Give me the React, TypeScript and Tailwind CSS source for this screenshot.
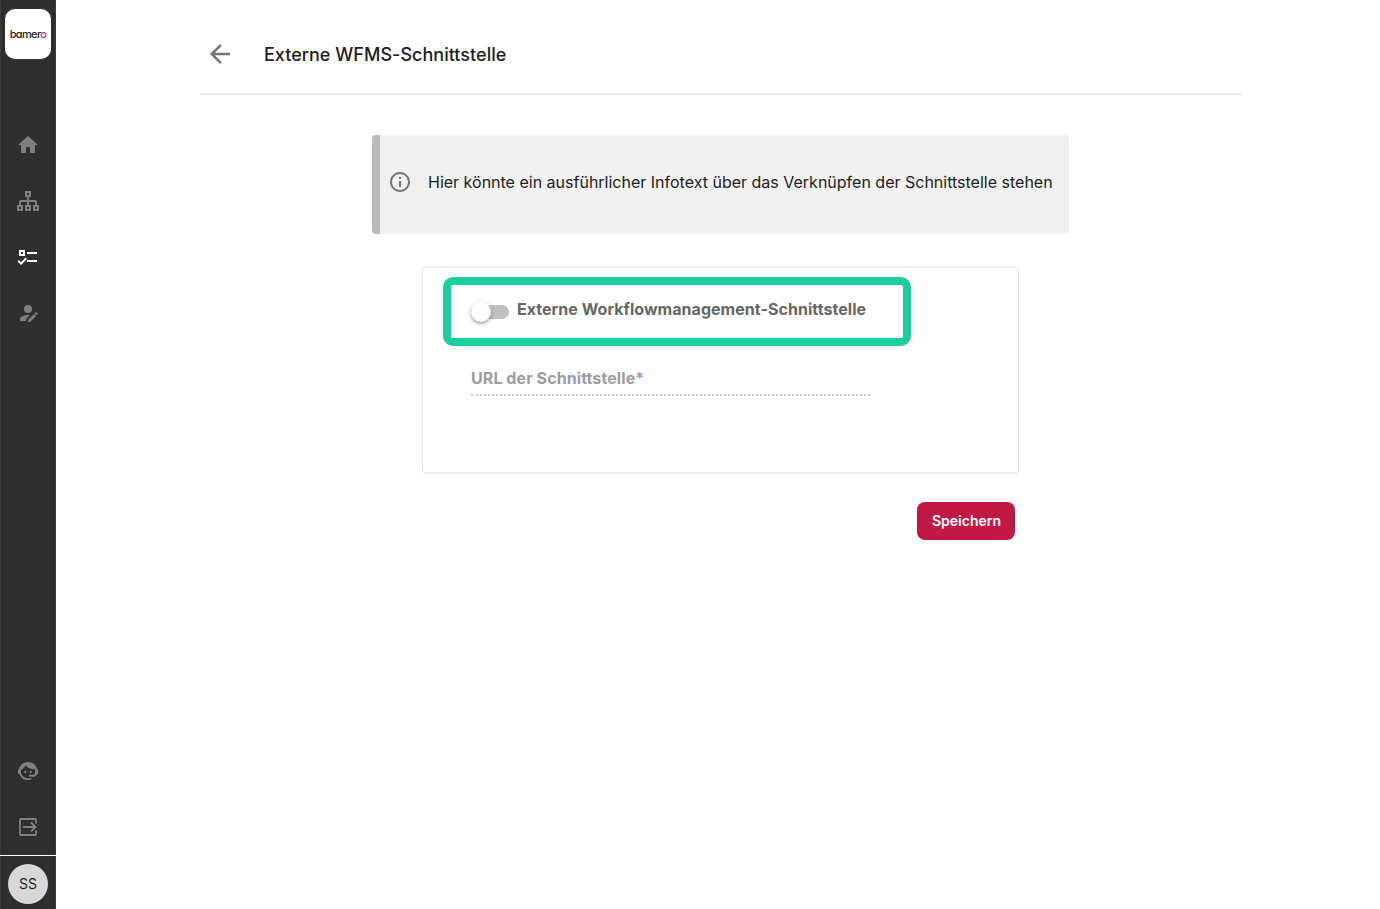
import React from "react";
import { MdHome, MdArrowBack, MdInfoOutline } from "react-icons/md";

function Icon({ children }: { children: React.ReactNode }) {
  return (
    <svg viewBox="0 0 24 24" className="size-6" fill="currentColor" aria-hidden="true">
      {children}
    </svg>
  );
}

function SitemapIcon() {
  return (
    <Icon>
      <g fill="none" stroke="currentColor" strokeWidth="2">
        <path d="M10 3h4v4h-4zM2 17h4v4H2zM10 17h4v4h-4zM18 17h4v4h-4zM12 8v8M4 16v-3q0-1 1-1h14q1 0 1 1v3" />
      </g>
    </Icon>
  );
}

function ChecklistIcon() {
  return (
    <Icon>
      <path d="M3 5v6h6V5H3m2 2h2v2H5V7m6 0h10v2H11V7m0 8h10v2H11v-2m-6 5l-3.500-3.500 1.410-1.410L5 17.170l4.590-4.580L11 14l-6 6z" />
    </Icon>
  );
}

function AccountEditIcon() {
  return (
    <Icon>
      <path d="M21.7 13.35L20.7 14.35L18.65 12.3L19.65 11.3C19.86 11.09 20.21 11.09 20.42 11.3L21.7 12.58C21.91 12.79 21.91 13.14 21.7 13.35M12 18.94L18.06 12.88L20.11 14.93L14.06 21H12V18.94M12 14C7.58 14 4 15.79 4 18V20H10V18.11L14 14.11C13.34 14.03 12.67 14 12 14M12 4A4 4 0 0 0 8 8A4 4 0 0 0 12 12A4 4 0 0 0 16 8A4 4 0 0 0 12 4Z" />
    </Icon>
  );
}

function AgentIcon() {
  return (
    <Icon>
      <path d="M18.72 14.76C19.07 13.91 19.26 13 19.26 12C19.26 11.28 19.15 10.59 18.96 9.95C18.31 10.1 17.63 10.18 16.92 10.18C13.86 10.18 11.15 8.67 9.5 6.34C8.61 8.5 6.91 10.26 4.77 11.22C4.73 11.47 4.73 11.74 4.73 12A7.27 7.27 0 0 0 12 19.27C13.05 19.27 14.06 19.04 14.97 18.63C15.54 19.72 15.8 20.26 15.78 20.26C14.14 20.81 12.87 21.08 12 21.08C9.58 21.08 7.27 20.13 5.57 18.42C4.53 17.38 3.76 16.11 3.33 14.73H2V10.18H3.09C3.93 6.04 7.6 2.92 12 2.92C14.4 2.92 16.71 3.87 18.42 5.58C19.69 6.84 20.54 8.45 20.89 10.18H22V14.73H21.94L18.38 18L13.08 17.4V15.73H17.91L18.72 14.76M9.27 11.77C9.57 11.77 9.86 11.89 10.07 12.11C10.28 12.32 10.4 12.61 10.4 12.91C10.4 13.21 10.28 13.5 10.07 13.71C9.86 13.92 9.57 14.04 9.27 14.04C8.64 14.04 8.13 13.54 8.13 12.91C8.13 12.28 8.64 11.77 9.27 11.77M14.72 11.77C15.35 11.77 15.85 12.28 15.85 12.91C15.85 13.54 15.35 14.04 14.72 14.04C14.09 14.04 13.58 13.54 13.58 12.91A1.14 1.14 0 0 1 14.72 11.77Z" />
    </Icon>
  );
}

function ExitIcon() {
  return (
    <Icon>
      <path
        d="M20 8.500V5q0-1-1-1H5Q4 4 4 5v14q0 1 1 1h14q1 0 1-1v-3.500M7 12h12M15 7.500l4.500 4.500-4.500 4.500"
        fill="none"
        stroke="currentColor"
        strokeWidth="1.800"
      />
    </Icon>
  );
}

function Sidebar() {
  return (
    <aside className="flex h-full w-14 shrink-0 flex-col items-center border-x border-[#3b3b3b] bg-[#2e2e2e] text-[#808080]">
      <div className="mt-[9px] flex h-[50px] w-[46px] shrink-0 items-center justify-center rounded-[10px] bg-white text-[11px] font-medium tracking-[-0.650px] text-[#222] [font-feature-settings:'cv11'_1]">
        <span>
          bamer<span className="text-[#d51f4f]">o</span>
        </span>
      </div>
      <nav className="mt-[74px] flex flex-col gap-8">
        <MdHome className="size-6" />
        <SitemapIcon />
        <span className="text-white">
          <ChecklistIcon />
        </span>
        <AccountEditIcon />
      </nav>
      <div className="mt-auto flex flex-col gap-8 pb-4">
        <AgentIcon />
        <ExitIcon />
      </div>
      <div className="flex h-[54px] w-14 shrink-0 items-center justify-center border-t border-white pt-[3px]">
        <div className="flex size-10 items-center justify-center rounded-full bg-[#d8d8d8] text-sm text-[#1f1f1f]">SS</div>
      </div>
    </aside>
  );
}

export default function App() {
  return (
    <div className="flex h-[909px] w-[1380px] overflow-hidden bg-white font-['Inter',sans-serif] text-[#212121]">
      <Sidebar />
      <main className="flex flex-col pl-36">
        <header className="flex h-[95px] w-[1041px] items-center border-b-2 border-[#e8e8e8] pt-4">
          <MdArrowBack className="mb-px ml-[5px] size-[30px] text-[#757575]" />
          <h1 className="ml-[29px] text-lg font-medium tracking-[0.020px]">Externe WFMS-Schnittstelle</h1>
        </header>
        <section className="mt-10 ml-[172px] flex h-[99px] w-[697px] items-center rounded border-l-8 border-[#bababa] bg-[#f1f1f1] pb-[5px] pl-2">
          <MdInfoOutline className="size-6 shrink-0 text-[#757575]" />
          <p className="ml-4 text-base whitespace-nowrap">
            Hier könnte ein ausführlicher Infotext über das Verknüpfen der Schnittstelle stehen
          </p>
        </section>
        <section className="mt-8 ml-[222px] h-[208px] w-[597px] rounded border-x border-y-2 border-x-[#dfdfdf] border-y-[#eeeeee] pt-[9px] pl-5">
          <div className="flex h-[69px] w-[468px] items-center rounded-[10px] border-8 border-[#19cf9c] pl-5">
            <span className="mt-[1px] flex h-[14px] w-[38px] items-center rounded-full bg-[#c1c1c1]">
              <span className="size-5 shrink-0 rounded-full bg-white shadow-[0_2px_3px_rgba(0,0,0,0.28),0_1px_6px_rgba(0,0,0,0.15)]" />
            </span>
            <label className="mb-[6px] ml-2 text-base font-bold tracking-[0.040px] whitespace-nowrap text-[#666]">
              Externe Workflowmanagement-Schnittstelle
            </label>
          </div>
          <div className="mt-5 ml-7 h-[30px] w-[399px] border-b-2 border-dotted border-[#c8c8c8] text-base font-bold tracking-[0.080px] text-[#9d9d9d]">
            URL der Schnittstelle*
          </div>
        </section>
        <button className="mt-[27.500px] ml-[717px] flex h-[38px] w-[98px] shrink-0 items-center justify-center rounded-lg bg-[#c11846] pl-px text-sm font-semibold text-white">
          Speichern
        </button>
      </main>
    </div>
  );
}
